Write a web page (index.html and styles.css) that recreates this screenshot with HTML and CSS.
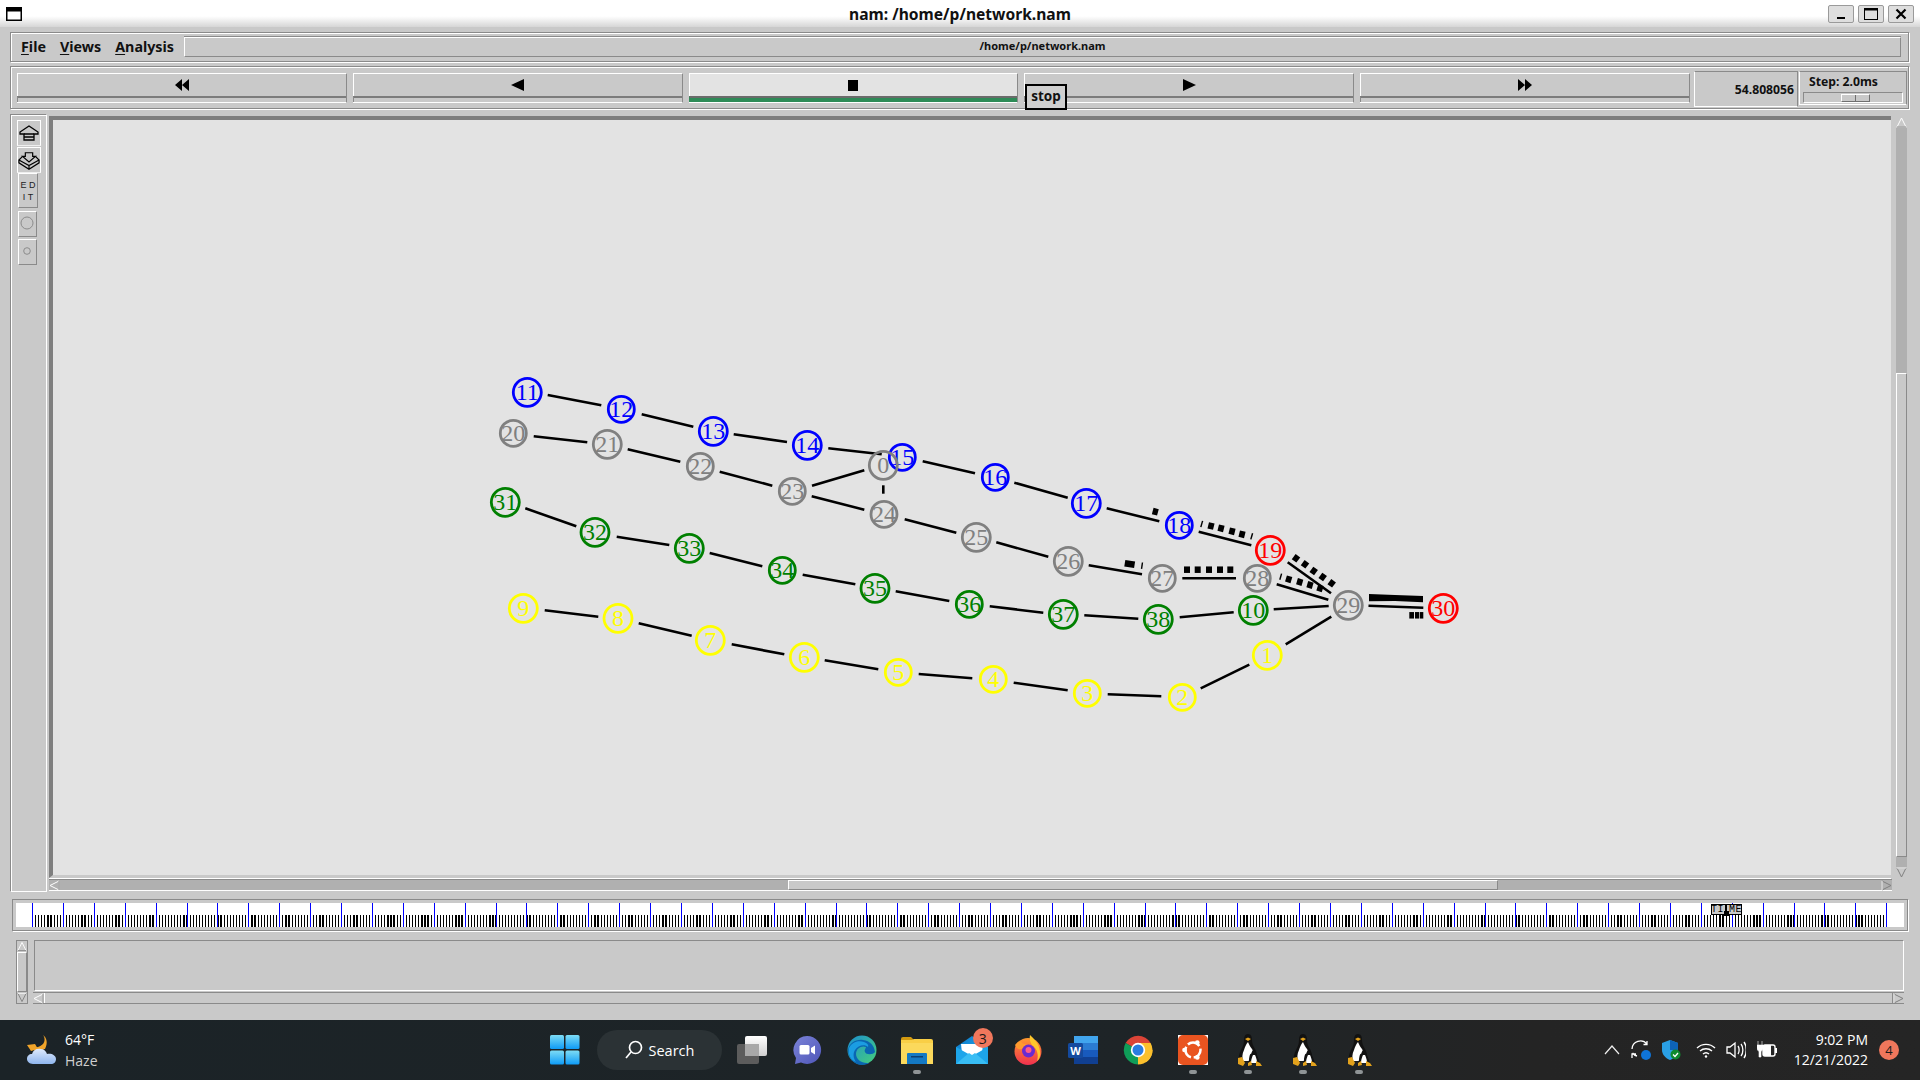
FILE: index.html
```html
<!DOCTYPE html>
<html lang="en">
<head>
<meta charset="utf-8">
<title>nam: /home/p/network.nam</title>
<link rel="stylesheet" href="styles.css">
</head>
<body>
<svg class="defs" width="0" height="0" aria-hidden="true">
  <defs>
    <linearGradient id="startG" x1="0" y1="0" x2="0" y2="1"><stop offset="0" stop-color="#7ddcf5"/><stop offset="1" stop-color="#0e9bf6"/></linearGradient>
    <linearGradient id="teamsG" x1="0" y1="0" x2="1" y2="1"><stop offset="0" stop-color="#7b83d8"/><stop offset="1" stop-color="#4f56b8"/></linearGradient>
    <linearGradient id="edgeG" x1="0" y1="0" x2="1" y2="1"><stop offset="0" stop-color="#1c8fd0"/><stop offset="1" stop-color="#46d07a"/></linearGradient>
    <linearGradient id="mailG" x1="0" y1="0" x2="1" y2="1"><stop offset="0" stop-color="#0b76c9"/><stop offset="1" stop-color="#29b9f2"/></linearGradient>
    <linearGradient id="foxG" x1="0" y1="0" x2="0" y2="1"><stop offset="0" stop-color="#ff9a2e"/><stop offset="1" stop-color="#f0304f"/></linearGradient>
    <linearGradient id="cloudG" x1="0" y1="0" x2="0" y2="1"><stop offset="0" stop-color="#dfeafc"/><stop offset="1" stop-color="#8fb6ee"/></linearGradient>
    <linearGradient id="frontG" x1="0" y1="0" x2="0" y2="1"><stop offset="0" stop-color="#ffffff"/><stop offset="1" stop-color="#cfcfcf"/></linearGradient>
    <symbol id="tux" viewBox="0 0 28 34">
      <path d="M11 1c-3 0-4 3-4 6 0 4-1 6-3 10-2 4-3 8-2 11l17 1c2-4 1-9-1-13-2-3-3-6-3-9 0-3-1-6-4-6z" fill="#111"/>
      <path d="M11 9c-2 2-3 5-4 8-2 4-2 8-1 11h9c3-4 2-9 0-12-2-2-3-5-4-7z" fill="#fff"/>
      <path d="M8 6l3 2 3-2-3-1.500z" fill="#e3a21c"/>
      <path d="M1 25l4-1 3 6-2 3-5-2z" fill="#e3a21c"/>
      <path d="M14 21c-1-1-2 4-2 6l-1 3h12l-3-8c-1-3-2-5-3-5-2 0-2 2-3 4z" fill="#111"/>
      <path d="M16 22c-1 2-2 5-2 8h6c0-3-1-6-2-8z" fill="#fff"/>
      <path d="M11 30l3-2 1 4-4 1zM19 28l4 2 2 3-6 0z" fill="#e3a21c"/>
    </symbol>
    <symbol id="arrowUp" viewBox="0 0 11 11"><path d="M1 10L5.500 1 10 10z" fill="none" stroke="#fff"/><path d="M1 10h9" stroke="#808080"/></symbol>
    <symbol id="arrowDown" viewBox="0 0 11 11"><path d="M1 1L5.500 10 10 1z" fill="none" stroke="#808080"/><path d="M1 1h9" stroke="#fff"/></symbol>
    <symbol id="arrowLeft" viewBox="0 0 11 11"><path d="M10 1L1 5.500 10 10z" fill="none" stroke="#fff"/><path d="M10 1v9" stroke="#808080"/></symbol>
    <symbol id="arrowRight" viewBox="0 0 11 11"><path d="M1 1L10 5.500 1 10z" fill="none" stroke="#808080"/><path d="M1 1v9" stroke="#fff"/></symbol>
  </defs>
</svg>

<header class="titlebar">
  <svg class="win-icon" viewBox="0 0 16 14"><rect x=".75" y=".75" width="14.500" height="12.500" fill="#fff" stroke="#000" stroke-width="1.500"/><rect width="16" height="4.500"/></svg>
  <div class="title">nam: /home/p/network.nam</div>
  <div class="win-buttons">
    <div class="win-btn"><svg viewBox="0 0 26 18" width="26" height="18"><rect x="9" y="12" width="8" height="2"/></svg></div>
    <div class="win-btn"><svg viewBox="0 0 26 18" width="26" height="18"><rect x="6.500" y="3.500" width="13" height="11" fill="none" stroke="#000"/><rect x="6" y="3" width="14" height="2.500"/></svg></div>
    <div class="win-btn"><svg viewBox="0 0 26 18" width="26" height="18"><path d="M8.500 4.500l9 9M17.500 4.500l-9 9" stroke="#000" stroke-width="2.200" fill="none"/></svg></div>
  </div>
</header>

<main class="window">
  <section class="frame menu-frame">
    <nav class="menus">
      <span class="menu"><u>F</u>ile</span>
      <span class="menu"><u>V</u>iews</span>
      <span class="menu"><u>A</u>nalysis</span>
    </nav>
    <div class="path-label">/home/p/network.nam</div>
  </section>

  <section class="frame ctrl-frame">
    <div class="buttons">
      <div class="btn"><div class="btn-face"><svg width="14" height="12" viewBox="0 0 14 12"><path d="M7 0v12L0 6zM14 0v12L7 6z"/></svg></div><div class="btn-led"></div></div>
      <div class="btn"><div class="btn-face"><svg width="13" height="12" viewBox="0 0 13 12"><path d="M13 0v12L0 6z"/></svg></div><div class="btn-led"></div></div>
      <div class="btn btn-on"><div class="btn-face"><svg width="10" height="11" viewBox="0 0 10 11"><rect width="10" height="11"/></svg></div><div class="btn-led"></div></div>
      <div class="btn"><div class="btn-face"><svg width="13" height="12" viewBox="0 0 13 12"><path d="M0 0v12l13-6z"/></svg></div><div class="btn-led"></div></div>
      <div class="btn"><div class="btn-face"><svg width="14" height="12" viewBox="0 0 14 12"><path d="M0 0v12l7-6zM7 0v12l7-6z"/></svg></div><div class="btn-led"></div></div>
    </div>
    <div class="time-panel">54.808056</div>
    <div class="step-panel">
      <div class="step-label">Step: 2.0ms</div>
      <div class="step-trough"><div class="step-thumb"></div></div>
    </div>
    <div class="tooltip">stop</div>
  </section>

  <section class="main">
    <aside class="tools">
      <div class="tool tool-wide">
        <svg width="22" height="18" viewBox="0 0 22 18" fill="none" stroke="#000" stroke-width="1.300"><path d="M11 1L2 7v2h4v6h10V9h4V7z"/><path d="M6 9h10M6 12h10"/></svg>
      </div>
      <div class="tool tool-wide">
        <svg width="24" height="20" viewBox="0 0 24 20" fill="none" stroke="#000" stroke-width="1.300"><path d="M8 1h8v4h3l-7 6-7-6h3z"/><path d="M5 5L1 9v3l11 7 11-7V9l-4-4M1 9l11 6 11-6M12 15v4"/></svg>
      </div>
      <div class="tool tool-edit"><span>E D</span><span>I T</span></div>
      <div class="tool tool-small"><svg width="14" height="14" viewBox="0 0 14 14"><circle cx="7" cy="7" r="6" fill="none" stroke="#8c8c8c"/></svg></div>
      <div class="tool tool-small"><svg width="8" height="8" viewBox="0 0 8 8"><circle cx="4" cy="4" r="3.300" fill="none" stroke="#8c8c8c"/></svg></div>
    </aside>
    <div class="view">
      <div class="canvas">
        <svg class="net" viewBox="53 120 1838 755" width="1838" height="755">
          <g class="links">
            <line x1="547.7" y1="395" x2="601.3" y2="405.3"/><line x1="641.7" y1="414.3" x2="693.3" y2="426.7"/><line x1="733.7" y1="434.3" x2="787" y2="442"/><line x1="828.3" y1="448.3" x2="881.7" y2="454.3"/><line x1="922.7" y1="461.3" x2="975" y2="473.3"/><line x1="1014.3" y1="482.7" x2="1067.7" y2="497.7"/><line x1="1106.7" y1="508.3" x2="1159.3" y2="521.3"/><line x1="1198.7" y1="531.7" x2="1251.3" y2="545.3"/><line x1="1287.7" y1="562.3" x2="1331" y2="593.3"/>
            <line x1="533.7" y1="436.3" x2="587.3" y2="442.3"/><line x1="627.7" y1="449.3" x2="680.3" y2="461.7"/><line x1="719.7" y1="471.7" x2="772.3" y2="485.7"/><line x1="812" y1="485.7" x2="864.3" y2="470.3"/><line x1="811.7" y1="496.3" x2="864.3" y2="509.7"/><line x1="883.3" y1="485.3" x2="883.3" y2="493.7"/><line x1="904.7" y1="519.3" x2="956.3" y2="532.7"/><line x1="996.3" y1="542.3" x2="1048.3" y2="556.7"/><line x1="1088.7" y1="565.3" x2="1142" y2="574.3"/><line x1="1182.3" y1="578.3" x2="1236" y2="578.3"/><line x1="1276.7" y1="584.3" x2="1328.3" y2="599.7"/>
            <line x1="525.3" y1="508.3" x2="576.3" y2="526.3"/><line x1="616.7" y1="536.7" x2="669.3" y2="545"/><line x1="709.7" y1="553" x2="762.3" y2="566.3"/><line x1="802.7" y1="574.7" x2="855.3" y2="584.3"/><line x1="895.7" y1="591.3" x2="949.3" y2="601"/><line x1="989.7" y1="606.3" x2="1043.3" y2="612.7"/><line x1="1084.3" y1="615.3" x2="1138.3" y2="618.7"/><line x1="1179.7" y1="617.3" x2="1233.7" y2="612.3"/><line x1="1273.7" y1="609.3" x2="1328.7" y2="606"/>
            <line x1="544.7" y1="610.3" x2="598.3" y2="616.7"/><line x1="638.7" y1="623.3" x2="691.7" y2="635.7"/><line x1="731.7" y1="644.3" x2="784.3" y2="654.3"/><line x1="824.7" y1="660.3" x2="878.3" y2="669.3"/><line x1="918.7" y1="674" x2="972.3" y2="678.3"/><line x1="1013.7" y1="682.7" x2="1067.7" y2="690.3"/><line x1="1107.7" y1="694.3" x2="1161.3" y2="696.3"/><line x1="1200.7" y1="688.3" x2="1249.3" y2="664.7"/><line x1="1285.7" y1="644.3" x2="1331.3" y2="616.7"/>
            <line x1="1368.5" y1="605.7" x2="1423.3" y2="607.7"/>
          </g>
          <g class="packets">
            <line x1="1152.7" y1="511" x2="1157.9" y2="512.4"/>
            <line x1="1201" y1="523.8" x2="1202.4" y2="524.2"/><line x1="1208.2" y1="525.3" x2="1213.8" y2="526.7"/><line x1="1218.2" y1="527.6" x2="1223.8" y2="529"/><line x1="1229.2" y1="530.6" x2="1234.8" y2="532"/><line x1="1239.2" y1="533.6" x2="1244.8" y2="535"/><line x1="1251" y1="536.1" x2="1252.4" y2="536.5"/>
            <line x1="1124.8" y1="563.2" x2="1134.6" y2="564.8"/><line x1="1141.3" y1="565.6" x2="1142.7" y2="565.8"/>
            <line x1="1184" y1="569.7" x2="1190" y2="569.7"/><line x1="1194.7" y1="569.7" x2="1200.7" y2="569.7"/><line x1="1206" y1="569.7" x2="1212" y2="569.7"/><line x1="1217" y1="569.7" x2="1223" y2="569.7"/><line x1="1227.3" y1="569.7" x2="1233.3" y2="569.7"/>
            <line x1="1293.7" y1="556.6" x2="1298.3" y2="560"/><line x1="1302.7" y1="562.6" x2="1307.3" y2="566"/><line x1="1311.4" y1="569.3" x2="1316" y2="572.7"/><line x1="1320.4" y1="575.3" x2="1325" y2="578.7"/><line x1="1329.4" y1="581.6" x2="1334" y2="585"/>
            <line x1="1280" y1="576.5" x2="1281.4" y2="576.9"/><line x1="1286" y1="578.5" x2="1291.4" y2="580.1"/><line x1="1297" y1="581.2" x2="1302.4" y2="582.8"/><line x1="1307.3" y1="584.2" x2="1312.7" y2="585.8"/><line x1="1317.3" y1="587.5" x2="1322.7" y2="589.1"/>
            <line x1="1409.3" y1="615.3" x2="1414" y2="615.3"/><line x1="1415" y1="615.3" x2="1419.3" y2="615.3"/><line x1="1420" y1="615.3" x2="1423.3" y2="615.3"/>
            <polygon points="1369,594 1395,595 1423,596 1423,602.300 1395,601 1369,601.300"/>
          </g>
          <g class="nodes blue">
            <circle cx="527.3" cy="392.3" r="14"/><text x="527.3" y="399.800">11</text>
            <circle cx="621.3" cy="409.3" r="13"/><text x="621.3" y="416.800">12</text>
            <circle cx="713.3" cy="431.3" r="14"/><text x="713.3" y="438.800">13</text>
            <circle cx="807.3" cy="445.3" r="14"/><text x="807.3" y="452.800">14</text>
            <circle cx="902.3" cy="457.3" r="13"/><text x="902.3" y="464.800">15</text>
            <circle cx="995.3" cy="477.3" r="13"/><text x="995.3" y="484.800">16</text>
            <circle cx="1086.3" cy="503.3" r="14"/><text x="1086.3" y="510.800">17</text>
            <circle cx="1179.3" cy="525.3" r="13"/><text x="1179.3" y="532.800">18</text>
          </g>
          <g class="nodes red">
            <circle cx="1270.3" cy="550.3" r="14"/><text x="1270.3" y="557.800">19</text>
            <circle cx="1443.3" cy="608.3" r="14"/><text x="1443.3" y="615.800">30</text>
          </g>
          <g class="nodes gray">
            <circle cx="883.3" cy="465.3" r="14"/><text x="883.3" y="472.800">0</text>
            <circle cx="513.3" cy="433.3" r="13"/><text x="513.3" y="440.800">20</text>
            <circle cx="607.3" cy="444.3" r="14"/><text x="607.3" y="451.800">21</text>
            <circle cx="700.3" cy="466.3" r="13"/><text x="700.3" y="473.800">22</text>
            <circle cx="792.3" cy="491.3" r="13"/><text x="792.3" y="498.800">23</text>
            <circle cx="884" cy="514.3" r="13"/><text x="884" y="521.800">24</text>
            <circle cx="976.3" cy="537.3" r="14"/><text x="976.3" y="544.800">25</text>
            <circle cx="1068.3" cy="561.3" r="14"/><text x="1068.3" y="568.800">26</text>
            <circle cx="1162.3" cy="578.3" r="13"/><text x="1162.3" y="585.800">27</text>
            <circle cx="1257.3" cy="578.3" r="13"/><text x="1257.3" y="585.800">28</text>
            <circle cx="1348.3" cy="605.3" r="14"/><text x="1348.3" y="612.800">29</text>
          </g>
          <g class="nodes green">
            <circle cx="505.3" cy="502.3" r="14"/><text x="505.3" y="509.800">31</text>
            <circle cx="595" cy="532.3" r="14"/><text x="595" y="539.800">32</text>
            <circle cx="689.3" cy="548.3" r="14"/><text x="689.3" y="555.800">33</text>
            <circle cx="782.3" cy="570.3" r="13"/><text x="782.3" y="577.800">34</text>
            <circle cx="875" cy="588.3" r="14"/><text x="875" y="595.800">35</text>
            <circle cx="969.3" cy="604.3" r="13"/><text x="969.3" y="611.800">36</text>
            <circle cx="1063.3" cy="614.3" r="14"/><text x="1063.3" y="621.800">37</text>
            <circle cx="1158.3" cy="619.3" r="14"/><text x="1158.3" y="626.800">38</text>
            <circle cx="1253.3" cy="610.3" r="14"/><text x="1253.3" y="617.800">10</text>
          </g>
          <g class="nodes yellow">
            <circle cx="523.3" cy="608.3" r="14"/><text x="523.3" y="615.800">9</text>
            <circle cx="618" cy="618.3" r="14"/><text x="618" y="625.800">8</text>
            <circle cx="710.3" cy="640.3" r="14"/><text x="710.3" y="647.800">7</text>
            <circle cx="804.3" cy="657.3" r="14"/><text x="804.3" y="664.800">6</text>
            <circle cx="898.3" cy="672.3" r="13"/><text x="898.3" y="679.800">5</text>
            <circle cx="993.3" cy="679.3" r="13"/><text x="993.3" y="686.800">4</text>
            <circle cx="1087.3" cy="693.3" r="13"/><text x="1087.3" y="700.800">3</text>
            <circle cx="1182.3" cy="697.3" r="13"/><text x="1182.3" y="704.800">2</text>
            <circle cx="1267.3" cy="655.3" r="14"/><text x="1267.3" y="662.800">1</text>
          </g>
        </svg>
      </div>
      <div class="vscroll">
        <svg class="arrow" width="11" height="11"><use href="#arrowUp"/></svg>
        <div class="v-trough-a"></div>
        <div class="v-thumb"></div>
        <div class="v-trough-b"></div>
        <svg class="arrow" width="11" height="11"><use href="#arrowDown"/></svg>
      </div>
      <div class="hscroll">
        <svg class="arrow" width="11" height="11"><use href="#arrowLeft"/></svg>
        <div class="h-trough-a"></div>
        <div class="h-thumb"></div>
        <div class="h-trough-b"></div>
        <svg class="arrow" width="11" height="11"><use href="#arrowRight"/></svg>
      </div>
    </div>
  </section>

  <section class="timeline">
    <div class="timeline-inner">
      <div class="ticks"></div>
    </div>
    <div class="time-marker"><span>TI</span><i class="marker-pin"></i><span>ME</span></div>
  </section>

  <section class="bottom">
    <div class="b-vscroll">
      <svg class="arrow" width="11" height="11"><use href="#arrowUp"/></svg>
      <div class="b-vthumb"></div>
      <svg class="arrow" width="11" height="11"><use href="#arrowDown"/></svg>
    </div>
    <div class="b-right">
      <div class="b-box"></div>
      <div class="b-hscroll">
        <svg class="arrow" width="11" height="11"><use href="#arrowLeft"/></svg>
        <div class="b-hthumb"></div>
        <svg class="arrow" width="11" height="11"><use href="#arrowRight"/></svg>
      </div>
    </div>
  </section>
</main>

<footer class="taskbar">
  <div class="weather">
    <svg width="32" height="30" viewBox="0 0 32 30"><path d="M17 0c3 4 2 10-5 12l-6 1 3 3 10-2c3-6 2-11-2-14z" fill="#f0a42a"/><path d="M1 10l8-1 3 5-7 2z" fill="#f0a42a"/><path d="M7 29c-4 0-6-3-6-5 0-3 2-5 5-5 1-4 5-6 9-5 3 0 5 2 6 5 4-1 9 1 9 5 0 3-2 5-5 5z" fill="url(#cloudG)"/></svg>
    <div class="weather-text"><span class="w-temp">64°F</span><span class="w-cond">Haze</span></div>
  </div>
  <div class="center-icons">
    <svg class="start" width="30" height="30" viewBox="0 0 30 30"><rect width="14" height="14" rx="1.500" fill="url(#startG)"/><rect x="15.500" width="14" height="14" rx="1.500" fill="url(#startG)"/><rect y="15.500" width="14" height="14" rx="1.500" fill="url(#startG)"/><rect x="15.500" y="15.500" width="14" height="14" rx="1.500" fill="url(#startG)"/></svg>
    <div class="search">
      <svg width="18" height="20" viewBox="0 0 18 20" fill="none" stroke="#fff" stroke-width="1.700"><circle cx="10.500" cy="7.500" r="6"/><path d="M6 12l-5 6"/></svg>
      <span>Search</span>
    </div>
    <div class="apps">
      <div class="app app-taskview"><svg width="30" height="28" viewBox="0 0 30 28"><rect x="0" y="8" width="22" height="20" rx="2" fill="#5c5c5c"/><rect x="8" y="0" width="22" height="20" rx="2" fill="url(#frontG)"/><rect x="8" y="8" width="14" height="12" fill="#a8a8a8"/></svg></div>
      <div class="app"><svg width="30" height="30" viewBox="0 0 30 30"><path d="M15 1a14 14 0 1 1-6 26.600L3 29l1-6A14 14 0 0 1 15 1z" fill="url(#teamsG)"/><rect x="7.500" y="10" width="10" height="9.500" rx="1.500" fill="#fff"/><path d="M19 13l4-2.500v9L19 17z" fill="#fff"/></svg></div>
      <div class="app"><svg width="30" height="30" viewBox="0 0 30 30"><circle cx="15" cy="15" r="14.500" fill="url(#edgeG)"/><path d="M1 15C2 8 9 4 16 5c7 1 11 5 12 12-2 3-9 3-10 0-1-2 1-4 1-5-4-2-10 1-10 7 0 5 5 9 11 9 1 0 3 0 4-1-3 2-6 3-9 3C7 30 1 23 1 15z" fill="#0a66b2"/><path d="M2 13C5 7 11 5 17 7c3 1 5 3 4 5-3-3-10-2-13 3-2 3-2 8 1 12C3 25 1 19 2 13z" fill="#1b9de2"/></svg></div>
      <div class="app"><svg width="32" height="27" viewBox="0 0 32 27"><path d="M0 2a2 2 0 0 1 2-2h8l3 3h-13z" fill="#d39a10"/><path d="M0 3h11l2-1h17a2 2 0 0 1 2 2v23H0z" fill="#f9cf46"/><path d="M0 6h32v21H0z" fill="#fbd95c"/><path d="M6 17a1 1 0 0 1 1-1h18a1 1 0 0 1 1 1v10H6z" fill="#1479c4"/><rect x="10" y="19" width="12" height="1.500" fill="#0b3f73"/></svg></div>
      <div class="app app-mail">
        <svg width="32" height="28" viewBox="0 0 32 28"><path d="M0 11L16 0l16 11v17H0z" fill="url(#mailG)"/><path d="M5 8h22l-1 9-10 5-10-5z" fill="#fff"/><path d="M0 11l16 9 16-9v17H0z" fill="#1da5ea"/><path d="M0 28l13-11 3 2 3-2 13 11z" fill="#38bdf4"/></svg>
        <span class="badge">3</span>
      </div>
      <div class="app"><svg width="30" height="30" viewBox="0 0 30 30"><circle cx="15" cy="16.500" r="13.500" fill="url(#foxG)"/><path d="M17 0c4 4 9 8 10 16 1 5-1 9-3 10 2-6 0-12-4-15-2-2-4-6-3-11z" fill="#ffc72c"/><path d="M2 10c2-3 4-4 6-4 0 2 2 3 4 3l5 2c-3 0-7 1-8 3-3 1-5 0-7-4z" fill="#ff9a2e"/><circle cx="15.500" cy="16" r="6.500" fill="#6a2bd0"/><circle cx="15.500" cy="15" r="3" fill="#ff5a8a"/></svg></div>
      <div class="app"><svg width="30" height="28" viewBox="0 0 30 28"><rect x="6" y="0" width="24" height="28" rx="2" fill="#2b7cd3"/><rect x="6" y="0" width="24" height="7" fill="#41a5ee"/><rect x="6" y="14" width="24" height="7" fill="#185abd"/><rect x="6" y="21" width="24" height="7" fill="#103f91"/><rect x="0" y="7" width="15" height="15" rx="1.500" fill="#144a9e"/><text class="word-w" x="7.500" y="19">W</text></svg></div>
      <div class="app"><svg width="30" height="30" viewBox="0 0 30 30"><path d="M15 15L2.600 8A14.500 14.500 0 0 1 27.600 8z" fill="#db4437"/><path d="M15 15h14.500A14.500 14.500 0 0 1 15 29.500z" fill="#fbc02d"/><path d="M15 15v14.500A14.500 14.500 0 0 1 2.600 8z" fill="#0f9d58"/><path d="M15 8h12.600a14.500 14.500 0 0 1-5 19.500L15 15z" fill="#fbc02d"/><circle cx="15" cy="15" r="7.200" fill="#fff"/><circle cx="15" cy="15" r="5.500" fill="#2a7de1"/></svg></div>
      <div class="app"><svg width="30" height="30" viewBox="0 0 30 30"><rect width="30" height="30" fill="#fff"/><rect width="30" height="30" rx="5" fill="#e95420"/><circle cx="15" cy="15" r="7.500" fill="none" stroke="#fff" stroke-width="2.500" stroke-dasharray="13 2.800" stroke-dashoffset="2"/><circle cx="6.500" cy="15" r="2.300" fill="#fff"/><circle cx="19.300" cy="7.600" r="2.300" fill="#fff"/><circle cx="19.300" cy="22.400" r="2.300" fill="#fff"/></svg></div>
      <div class="app app-tux"><svg width="28" height="34" viewBox="0 0 28 34"><use href="#tux"/></svg></div>
      <div class="app app-tux"><svg width="28" height="34" viewBox="0 0 28 34"><use href="#tux"/></svg></div>
      <div class="app app-tux"><svg width="28" height="34" viewBox="0 0 28 34"><use href="#tux"/></svg></div>
    </div>
  </div>
  <div class="tray">
    <svg width="16" height="10" viewBox="0 0 16 10" fill="none" stroke="#eee" stroke-width="1.200"><path d="M1 9l7-8 7 8"/></svg>
    <svg width="20" height="20" viewBox="0 0 20 20" fill="none" stroke="#fff" stroke-width="1.300"><path d="M1 9A8.500 8.500 0 0 1 16 4M16 1v3.500h-3.500M6 16A8 8 0 0 1 1.500 13M1 18v-4h4"/><circle cx="15" cy="15" r="5" fill="#0f74d8" stroke="none"/></svg>
    <svg width="19" height="20" viewBox="0 0 19 20"><path d="M0 3l8-3 8 3v7c0 4-3 8-8 10-5-2-8-6-8-10z" fill="#2aa0e6"/><path d="M8 0l8 3v7H8z" fill="#0e63b8"/><circle cx="13.500" cy="14.500" r="5" fill="#0f8a2e"/><path d="M11 14.500l2 2 3-3.500" fill="none" stroke="#fff" stroke-width="1.300"/></svg>
    <svg class="tray-wifi" width="20" height="16" viewBox="0 0 20 16" fill="none" stroke="#fff" stroke-width="1.400"><path d="M1 6a13 13 0 0 1 18 0M4 9a9 9 0 0 1 12 0M7 12a4.500 4.500 0 0 1 6 0"/><circle cx="10" cy="14.500" r="1.200" fill="#fff" stroke="none"/></svg>
    <svg width="20" height="18" viewBox="0 0 20 18" fill="none" stroke="#fff" stroke-width="1.300"><path d="M1 6h3l5-4v14l-5-4H1z"/><path d="M12 5c1.500 2 1.500 6 0 8M15 3c2.500 3 2.500 9 0 12M18 1c3 4 3 12 0 16"/></svg>
    <svg width="20" height="18" viewBox="0 0 20 18"><rect x="6" y="4" width="12" height="11" rx="2" fill="none" stroke="#fff" stroke-width="1.400"/><rect x="6" y="4" width="8" height="11" fill="#fff"/><rect x="18" y="7" width="2" height="5" fill="#fff"/><path d="M1 0v4M5 0v4M0 4h6v3c0 2-1 3-2 3v6H2v-6C1 10 0 9 0 7z" stroke="#fff" fill="#fff" stroke-width=".6"/></svg>
    <div class="clock"><span>9:02 PM</span><span>12/21/2022</span></div>
    <span class="notify">4</span>
  </div>
</footer>
</body>
</html>
```

FILE: styles.css
```css
* { box-sizing: border-box; }
html, body { margin: 0; padding: 0; }
body {
  width: 1920px;
  height: 1080px;
  overflow: hidden;
  display: flex;
  flex-direction: column;
  background: #c9c9c9;
  font-family: "Noto Sans", "DejaVu Sans", sans-serif;
  color: #111;
}
.defs { position: absolute; }

/* title bar */
.titlebar {
  height: 27px;
  flex: none;
  display: grid;
  grid-template-columns: 1fr auto 1fr;
  align-items: center;
  padding: 0 6px;
  background: linear-gradient(#fff 0, #fff 60%, #d6d6d6 100%);
}
.win-icon { width: 16px; height: 14px; }
.title { font-size: 15.600px; font-weight: 700; color: #111; }
.win-buttons { display: flex; justify-content: flex-end; gap: 4px; }
.win-btn {
  width: 26px;
  height: 18px;
  border: 1px solid #9a9a9a;
  border-radius: 2px;
  background: #dedede;
  display: flex;
  justify-content: center;
  align-items: center;
  overflow: hidden;
}
.win-btn svg { flex: none; }

/* window body */
.window {
  height: 993px;
  flex: none;
  display: flex;
  flex-direction: column;
  background: #c9c9c9;
  border-radius: 0 0 4px 4px;
}
.frame {
  width: 1899px;
  margin-left: 10px;
  border: 1px solid #8a8a8a;
  box-shadow: inset 1px 1px 0 #fff, 1px 1px 0 #fff;
}
.menu-frame {
  height: 30px;
  margin-top: 5px;
  display: flex;
  align-items: flex-start;
}
.menus {
  width: 173px;
  height: 26px;
  padding-left: 10px;
  display: flex;
  align-items: center;
  gap: 14px;
  font-size: 14.300px;
  font-weight: 700;
  flex: none;
}
.menu u { text-underline-offset: 2px; }
.path-label {
  width: 1717px;
  height: 20px;
  margin-top: 4px;
  border: 1px solid;
  border-color: #fff #8a8a8a #8a8a8a #fff;
  box-shadow: 0 -1px 0 #8a8a8a;
  display: flex;
  align-items: center;
  justify-content: center;
  font-size: 11px;
  font-weight: 700;
  padding-bottom: 3px;
}

/* control row */
.ctrl-frame {
  height: 43px;
  margin-top: 4px;
  position: relative;
  display: flex;
  align-items: flex-start;
  padding: 6px 0 0 6px;
}
.buttons { display: flex; gap: 6px; width: 1673px; flex: none; }
.btn {
  flex: 1;
  height: 30px;
  display: flex;
  flex-direction: column;
  border: 1px solid;
  border-color: #fff #8a8a8a #fff #fff;
}
.btn-face { flex: 1; display: flex; align-items: center; justify-content: center; }
.btn-led { height: 6px; flex: none; border-top: 2px solid #7c7c7c; margin-left: -1px; border-left: 1px solid #8a8a8a; }
.btn-on { background: #e3e3e3; }
.btn-on .btn-led { background: #2e8b57; border-top-color: #6b6b6b; border-left-color: #2e8b57; }
.time-panel {
  width: 104px;
  height: 36px;
  margin: -2px 0 0 4px;
  border: 1px solid;
  border-color: #8a8a8a #8a8a8a #fff #fff;
  display: flex;
  align-items: center;
  justify-content: flex-end;
  padding-right: 3px;
  font-size: 12.200px;
  font-weight: 700;
}
.step-panel {
  width: 108px;
  height: 34px;
  margin: -2px 0 0 1px;
  border: 1px solid;
  border-color: #8a8a8a #8a8a8a #fff #fff;
}
.step-label { font-size: 12.200px; font-weight: 700; padding: 2px 0 0 9px; line-height: 16px; height: 20px; }
.step-trough {
  width: 100px;
  height: 11px;
  margin-left: 3px;
  border: 1px solid;
  border-color: #8a8a8a #fff #fff #8a8a8a;
  padding: 1px 0 0 37px;
}
.step-thumb {
  width: 29px;
  height: 8px;
  background: linear-gradient(90deg, #c9c9c9 48%, #6f6f6f 48%, #6f6f6f 52%, #c9c9c9 52%);
  border: 1px solid;
  border-color: #fff #6f6f6f #6f6f6f #fff;
}
.tooltip {
  position: absolute;
  left: 1014px;
  top: 17px;
  width: 42px;
  height: 26px;
  border: 2px solid #000;
  background: #cfcfcf;
  display: flex;
  align-items: center;
  justify-content: center;
  font-size: 13.500px;
  font-weight: 700;
  padding-bottom: 3px;
}

/* main area */
.main {
  height: 778px;
  margin-top: 5px;
  margin-left: 10px;
  display: flex;
  flex: none;
}
.tools {
  width: 37px;
  height: 778px;
  border: 1px solid;
  border-color: #8a8a8a #fff #fff #8a8a8a;
  box-shadow: inset 1px 1px 0 #fff;
  padding-top: 5px;
  display: flex;
  flex-direction: column;
  align-items: flex-start;
  padding-left: 6px;
}
.tool {
  display: flex;
  align-items: center;
  justify-content: center;
  border: 1px solid;
  border-color: #fff #8a8a8a #8a8a8a #fff;
}
.tool-wide { width: 24px; height: 26px; margin-bottom: 1px; border-color: #fff; border-bottom-color: #eee; padding-top: 2px; }
.tool-wide + .tool-wide { margin-bottom: 0; height: 26px; }
.tool-edit {
  width: 20px;
  height: 35px;
  margin: 0 0 3px 1px;
  flex-direction: column;
  font-family: "Liberation Sans", sans-serif;
  font-size: 9px;
  line-height: 12px;
  color: #222;
  border-top-color: #fff;
}
.tool-edit span { white-space: pre; }
.tool-small { width: 19px; height: 26px; margin: 0 0 2px 1px; padding: 0 2px 3px 0; }
.view {
  width: 1858px;
  margin: 2px 0 0 2px;
  display: grid;
  grid-template-columns: 1842px 11px;
  grid-template-rows: 762px 12px;
  column-gap: 5px;
  row-gap: 1px;
}
.canvas {
  background: #e3e3e3;
  border-top: 4px solid #7f7f7f;
  border-left: 4px solid #7f7f7f;
  border-bottom: 3px solid #c9c9c9;
  box-shadow: 0 1px 0 #fff;
  overflow: hidden;
}
.net { display: block; }
.links line { stroke: #000; stroke-width: 2.600; }
.packets line { stroke: #000; stroke-width: 6.500; }
.packets polygon { fill: #000; }
.nodes circle { fill: none; stroke-width: 2.800; }
.nodes text {
  font-family: "Liberation Serif", serif;
  font-size: 24px;
  text-anchor: middle;
  transform: translateY(.5px);
}
.blue circle { stroke: #0000ff; } .blue text { fill: #0000ff; }
.red circle { stroke: #ff0000; } .red text { fill: #ff0000; }
.gray circle { stroke: #808080; } .gray text { fill: #808080; }
.green circle { stroke: #008000; } .green text { fill: #008000; }
.yellow circle { stroke: #ffff00; } .yellow text { fill: #ffff00; }

.arrow { display: block; flex: none; }
.vscroll {
  grid-column: 2;
  grid-row: 1;
  display: flex;
  flex-direction: column;
  margin-top: 1px;
}
.v-trough-a { height: 245px; background: #b0b0b0; flex: none; }
.v-thumb { flex: 1; background: #c9c9c9; border: 1px solid; border-color: #fff #8a8a8a #8a8a8a #fff; }
.v-trough-b { height: 10px; background: #b0b0b0; flex: none; }
.hscroll {
  grid-column: 1;
  grid-row: 2;
  display: flex;
  width: 1843px;
  background: #b0b0b0;
  border-top: 1px solid #8a8a8a;
  border-bottom: 1px solid #fff;
}
.h-trough-a { width: 728px; background: #b0b0b0; }
.h-thumb { width: 710px; background: #c9c9c9; border: 1px solid; border-color: #fff #8a8a8a #8a8a8a #fff; }
.h-trough-b { flex: 1; background: #b0b0b0; }

/* timeline */
.timeline {
  width: 1896px;
  height: 32px;
  margin: 7px 0 0 12px;
  flex: none;
  position: relative;
  border: 1px solid #8a8a8a;
  box-shadow: 1px 1px 0 #fff;
  padding: 3px;
  background: #c9c9c9;
}
.timeline-inner { height: 24px; background: #fff; padding-left: 16px; }
.ticks {
  width: 1855px;
  height: 24px;
  background-image:
    repeating-linear-gradient(90deg, #0000ff 0, #0000ff 1px, transparent 1px, transparent 30.905px),
    repeating-linear-gradient(90deg, #000 0, #000 1.200px, transparent 1.200px, transparent 3.0905px);
  background-size: 100% 24px, 1851px 12px;
  background-position: 0 0, 3px 100%;
  background-repeat: no-repeat;
}
.time-marker {
  position: absolute;
  left: 1698px;
  top: 4px;
  width: 31px;
  height: 11px;
  background: #c9c9c9;
  border: 1px solid #000;
  display: flex;
  align-items: center;
  justify-content: center;
  font-family: "Liberation Mono", monospace;
  font-size: 10px;
  line-height: 9px;
  letter-spacing: .5px;
  color: #000;
}
.marker-pin {
  width: 5px;
  height: 11px;
  flex: none;
  margin-top: 1px;
  background: linear-gradient(90deg, transparent 30%, #000 30%, #000 70%, transparent 70%) top/100% 6px no-repeat,
    linear-gradient(#000, #000) bottom/100% 5px no-repeat;
}

/* bottom panel */
.bottom {
  height: 64px;
  margin: 9px 0 0 16px;
  display: flex;
  flex: none;
}
.b-vscroll {
  width: 12px;
  height: 64px;
  border: 1px solid #8a8a8a;
  display: flex;
  flex-direction: column;
}
.b-vscroll .arrow { width: 10px; }
.b-vthumb { flex: 1; border: 1px solid; border-color: #fff #8a8a8a #8a8a8a #fff; }
.b-right { width: 1871px; margin-left: 5px; display: flex; flex-direction: column; gap: 1px; }
.b-box {
  height: 51px;
  width: 1870px;
  margin-left: .5px;
  border: 1px solid;
  border-color: #8a8a8a #fff #fff #8a8a8a;
}
.b-hscroll {
  height: 12px;
  display: flex;
  border-top: 1px solid #8a8a8a;
  border-bottom: 1px solid #8a8a8a;
}
.b-hthumb { flex: 1; border-left: 1px solid #fff; border-right: 1px solid #8a8a8a; }

/* taskbar */
.taskbar {
  height: 60px;
  flex: none;
  display: flex;
  align-items: center;
  background: linear-gradient(90deg, #1b2327 0, #1e2427 60%, #242424 80%, #252525 100%);
  color: #fff;
  font-family: "Open Sans", "Noto Sans", sans-serif;
  padding-left: 26px;
}
.weather { width: 524px; display: flex; align-items: center; gap: 7px; }
.weather-text { display: flex; flex-direction: column; font-size: 14px; line-height: 21px; }
.w-cond { color: #cfcfcf; }
.center-icons { display: flex; align-items: center; width: 1052px; flex: none; }
.start { flex: none; margin-right: 16.500px; }
.search {
  width: 125px;
  height: 40px;
  border-radius: 20px;
  background: #2b3235;
  display: flex;
  align-items: center;
  gap: 6px;
  padding-left: 28px;
  font-size: 14.500px;
  margin-right: 2.500px;
}
.apps { display: flex; align-items: center; }
.app {
  width: 55.200px;
  height: 60px;
  display: flex;
  align-items: center;
  justify-content: center;
  position: relative;
}
.app-tux { padding-left: 5px; }
.app-mail .badge {
  position: absolute;
  left: 28px;
  top: 8px;
  width: 20px;
  height: 20px;
  border-radius: 50%;
  background: #f0775c;
  color: #1a1a1a;
  font-size: 14px;
  display: flex;
  align-items: center;
  justify-content: center;
}
.app:nth-child(4)::after, .app:nth-child(9)::after, .app:nth-child(10)::after, .app:nth-child(11)::after, .app:nth-child(12)::after {
  content: "";
  position: absolute;
  bottom: 6px;
  left: 50%;
  width: 8px;
  height: 4px;
  margin-left: -4px;
  border-radius: 2px;
  background: #8f9496;
}
.word-w { fill: #fff; font-family: "Noto Sans", sans-serif; font-size: 11px; font-weight: 700; text-anchor: middle; }
.tray { display: flex; align-items: center; gap: 11px; margin-left: 2px; }
.tray-wifi { margin-left: 4px; margin-right: -1px; }
.clock {
  width: 80px;
  display: flex;
  flex-direction: column;
  align-items: flex-end;
  font-size: 14px;
  line-height: 20px;
  white-space: nowrap;
}
.notify {
  width: 20px;
  height: 20px;
  border-radius: 50%;
  background: #f0775c;
  color: #1a1a1a;
  font-size: 13px;
  display: flex;
  align-items: center;
  justify-content: center;
  flex: none;
}
```
